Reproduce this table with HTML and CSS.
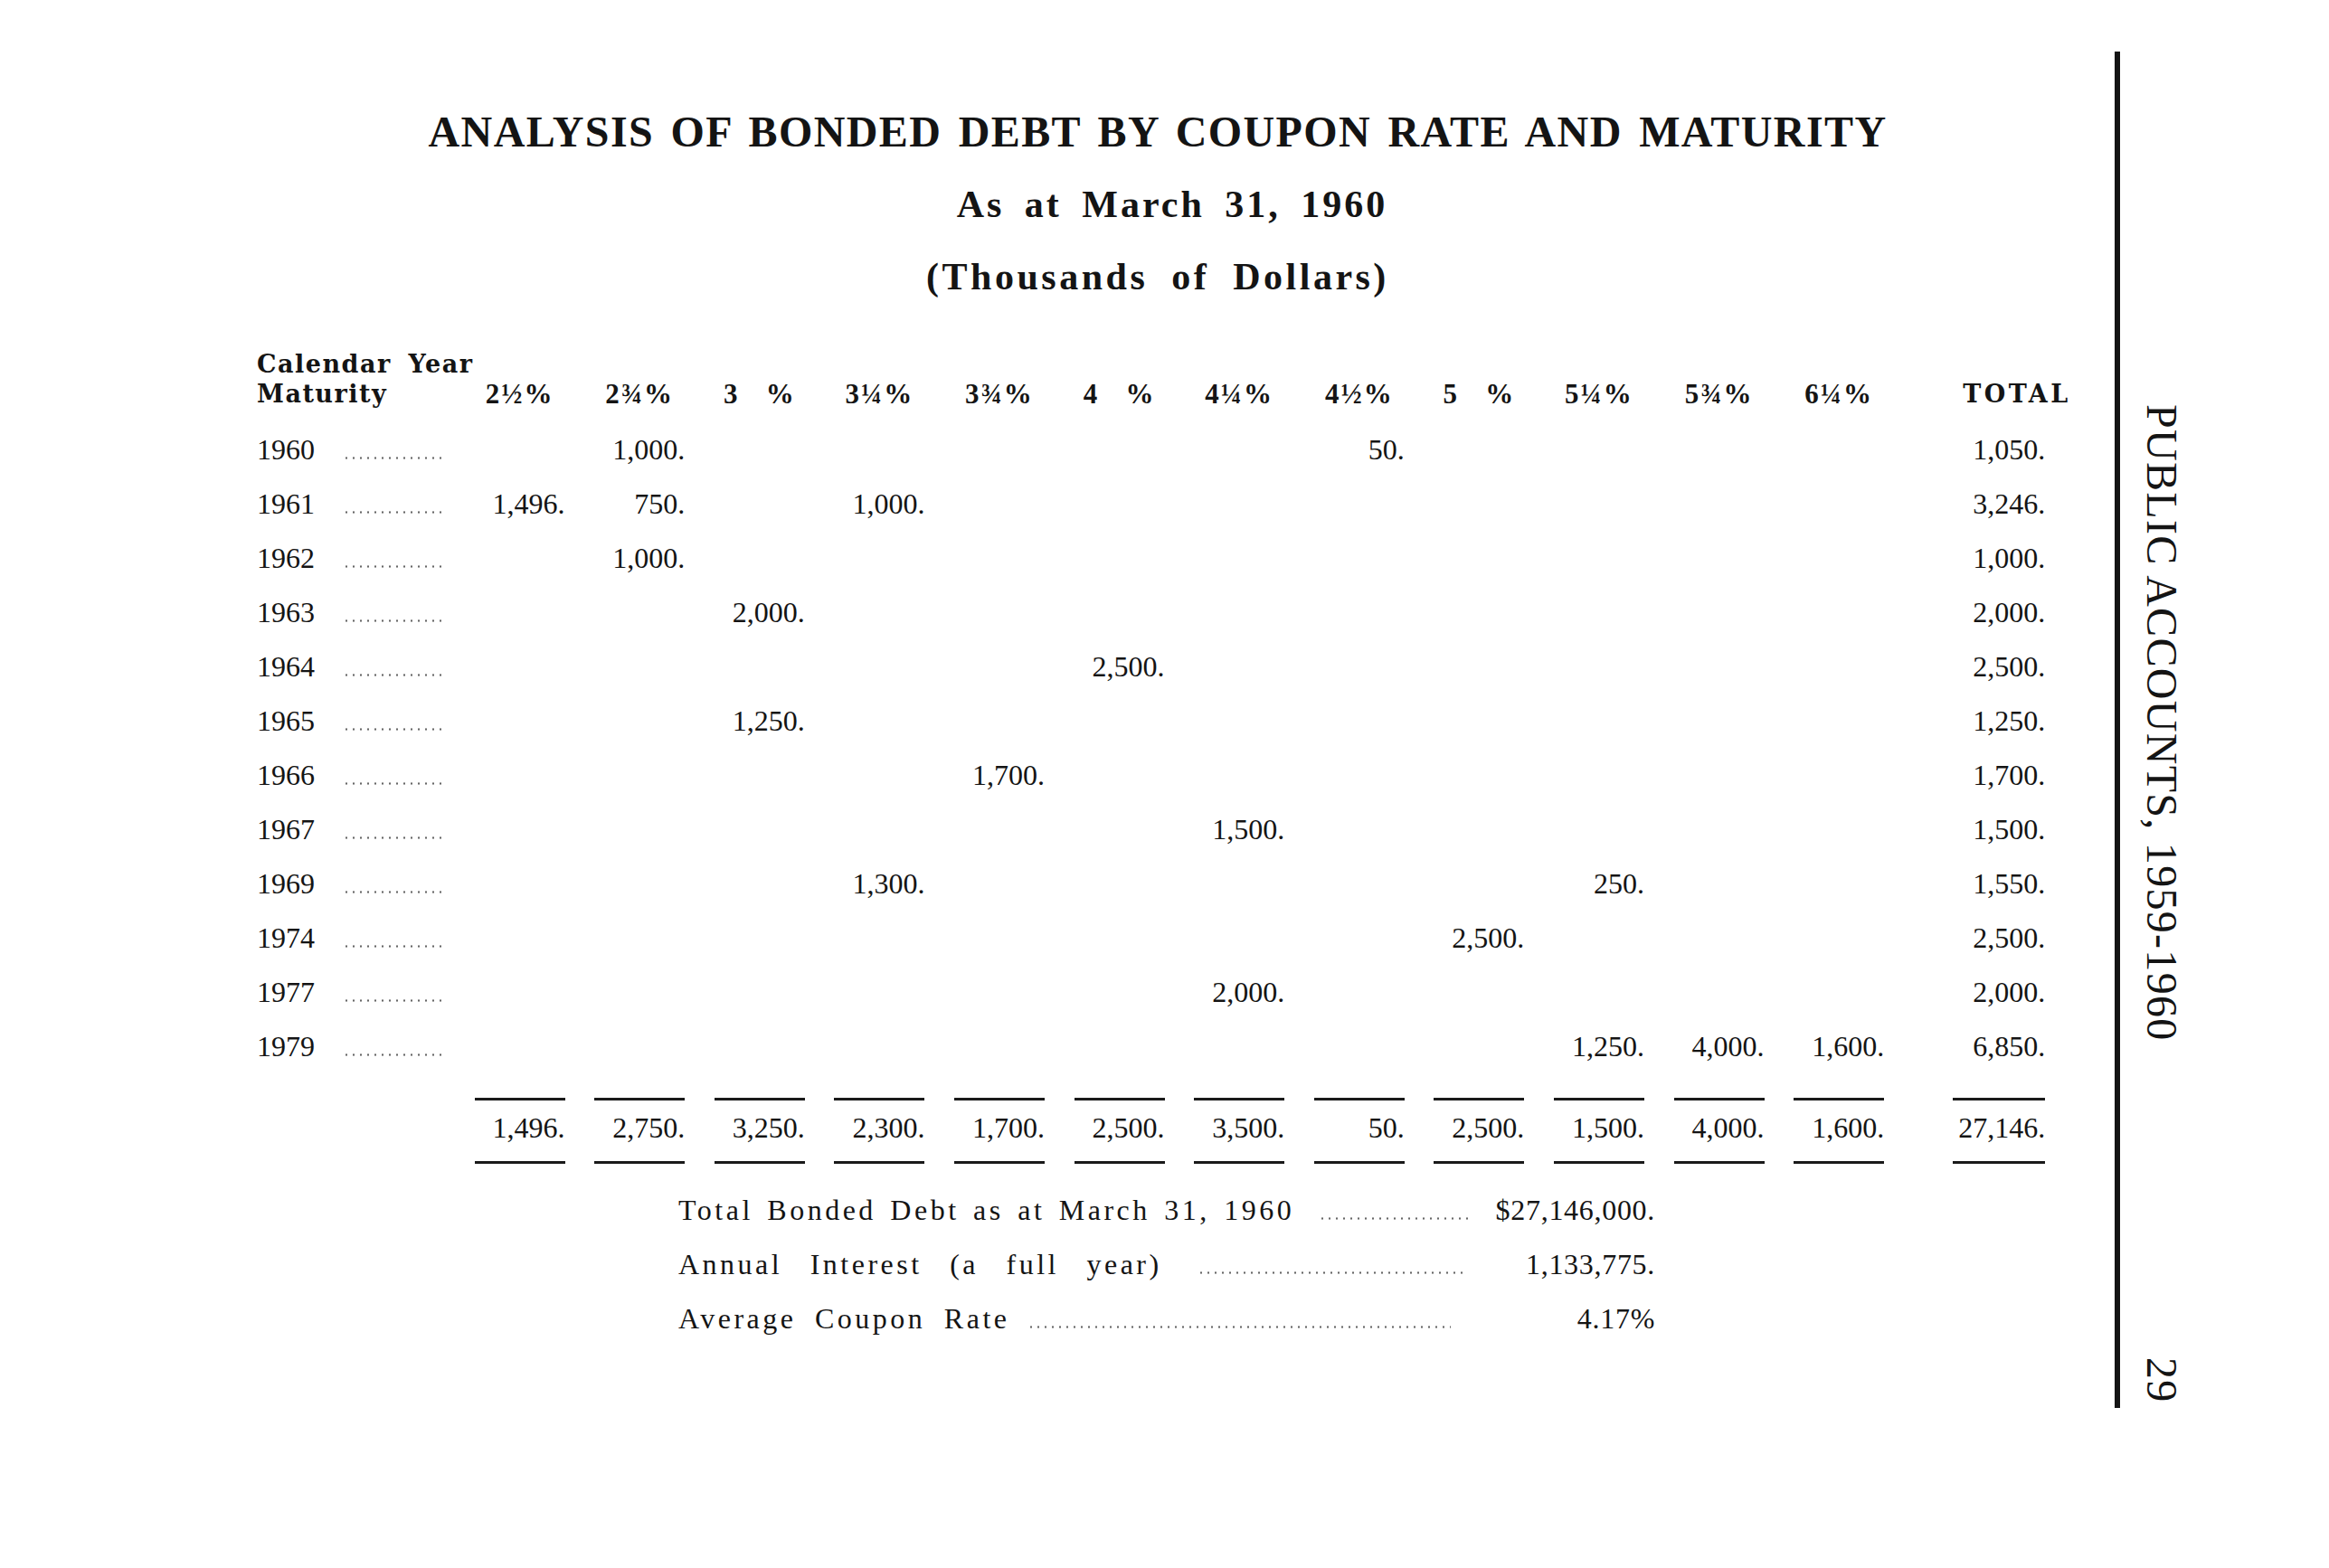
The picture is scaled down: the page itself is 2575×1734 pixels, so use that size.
FILE: index.html
```html
<!DOCTYPE html>
<html lang="en">
<head>
<meta charset="utf-8">
<title>Analysis of Bonded Debt by Coupon Rate and Maturity</title>
<link rel="stylesheet" href="styles.css">
</head>
<body>
<div class="page">
  <div class="main">
    <div class="heading">
      <div class="title">ANALYSIS OF BONDED DEBT BY COUPON RATE AND MATURITY</div>
      <div class="sub">As at March 31, 1960</div>
      <div class="units">(Thousands of Dollars)</div>
    </div>

    <div class="table">
      <div class="row hdr">
        <div class="lbl">Calendar Year<br>Maturity</div>
        <div class="pct">2½%</div>
        <div class="pct">2¾%</div>
        <div class="pct">3&nbsp;&nbsp;&nbsp;%</div>
        <div class="pct">3¼%</div>
        <div class="pct">3¾%</div>
        <div class="pct">4&nbsp;&nbsp;&nbsp;%</div>
        <div class="pct">4¼%</div>
        <div class="pct">4½%</div>
        <div class="pct">5&nbsp;&nbsp;&nbsp;%</div>
        <div class="pct">5¼%</div>
        <div class="pct">5¾%</div>
        <div class="pct">6¼%</div>
        <div class="lbl total">TOTAL</div>
      </div>

      <div class="rows">
        <div class="row data"><div class="yr">1960<span class="lead"></span></div><div></div><div class="v">1,000.</div><div></div><div></div><div></div><div></div><div></div><div class="v">50.</div><div></div><div></div><div></div><div></div><div class="v">1,050.</div></div>
        <div class="row data"><div class="yr">1961<span class="lead"></span></div><div class="v">1,496.</div><div class="v">750.</div><div></div><div class="v">1,000.</div><div></div><div></div><div></div><div></div><div></div><div></div><div></div><div></div><div class="v">3,246.</div></div>
        <div class="row data"><div class="yr">1962<span class="lead"></span></div><div></div><div class="v">1,000.</div><div></div><div></div><div></div><div></div><div></div><div></div><div></div><div></div><div></div><div></div><div class="v">1,000.</div></div>
        <div class="row data"><div class="yr">1963<span class="lead"></span></div><div></div><div></div><div class="v">2,000.</div><div></div><div></div><div></div><div></div><div></div><div></div><div></div><div></div><div></div><div class="v">2,000.</div></div>
        <div class="row data"><div class="yr">1964<span class="lead"></span></div><div></div><div></div><div></div><div></div><div></div><div class="v">2,500.</div><div></div><div></div><div></div><div></div><div></div><div></div><div class="v">2,500.</div></div>
        <div class="row data"><div class="yr">1965<span class="lead"></span></div><div></div><div></div><div class="v">1,250.</div><div></div><div></div><div></div><div></div><div></div><div></div><div></div><div></div><div></div><div class="v">1,250.</div></div>
        <div class="row data"><div class="yr">1966<span class="lead"></span></div><div></div><div></div><div></div><div></div><div class="v">1,700.</div><div></div><div></div><div></div><div></div><div></div><div></div><div></div><div class="v">1,700.</div></div>
        <div class="row data"><div class="yr">1967<span class="lead"></span></div><div></div><div></div><div></div><div></div><div></div><div></div><div class="v">1,500.</div><div></div><div></div><div></div><div></div><div></div><div class="v">1,500.</div></div>
        <div class="row data"><div class="yr">1969<span class="lead"></span></div><div></div><div></div><div></div><div class="v">1,300.</div><div></div><div></div><div></div><div></div><div></div><div class="v">250.</div><div></div><div></div><div class="v">1,550.</div></div>
        <div class="row data"><div class="yr">1974<span class="lead"></span></div><div></div><div></div><div></div><div></div><div></div><div></div><div></div><div></div><div class="v">2,500.</div><div></div><div></div><div></div><div class="v">2,500.</div></div>
        <div class="row data"><div class="yr">1977<span class="lead"></span></div><div></div><div></div><div></div><div></div><div></div><div></div><div class="v">2,000.</div><div></div><div></div><div></div><div></div><div></div><div class="v">2,000.</div></div>
        <div class="row data"><div class="yr">1979<span class="lead"></span></div><div></div><div></div><div></div><div></div><div></div><div></div><div></div><div></div><div></div><div class="v">1,250.</div><div class="v">4,000.</div><div class="v">1,600.</div><div class="v">6,850.</div></div>
      </div>

      <div class="row rules top">
        <div></div>
        <div class="rl"></div><div class="rl"></div><div class="rl"></div><div class="rl"></div><div class="rl"></div><div class="rl"></div>
        <div class="rl"></div><div class="rl"></div><div class="rl"></div><div class="rl"></div><div class="rl"></div><div class="rl"></div>
        <div class="rl wide"></div>
      </div>
      <div class="row data sums">
        <div></div>
        <div class="v">1,496.</div><div class="v">2,750.</div><div class="v">3,250.</div><div class="v">2,300.</div><div class="v">1,700.</div><div class="v">2,500.</div>
        <div class="v">3,500.</div><div class="v">50.</div><div class="v">2,500.</div><div class="v">1,500.</div><div class="v">4,000.</div><div class="v">1,600.</div>
        <div class="v">27,146.</div>
      </div>
      <div class="row rules bottom">
        <div></div>
        <div class="rl"></div><div class="rl"></div><div class="rl"></div><div class="rl"></div><div class="rl"></div><div class="rl"></div>
        <div class="rl"></div><div class="rl"></div><div class="rl"></div><div class="rl"></div><div class="rl"></div><div class="rl"></div>
        <div class="rl wide"></div>
      </div>
    </div>

    <div class="summary">
      <div class="s-label r1"><span>Total Bonded Debt as at March 31, 1960</span><span class="s-dots d1"></span></div>
      <div class="s-val">$27,146,000.</div>
      <div class="s-label r2"><span>Annual Interest (a full year)</span><span class="s-dots d2"></span></div>
      <div class="s-val">1,133,775.</div>
      <div class="s-label r3"><span>Average Coupon Rate</span><span class="s-dots d3"></span></div>
      <div class="s-val">4.17%</div>
    </div>
  </div>

  <div class="vline"></div>

  <div class="side">
    <span class="side-title">PUBLIC ACCOUNTS, 1959-1960</span>
    <span class="folio">29</span>
  </div>
</div>
</body>
</html>
```

FILE: styles.css
```css
* { box-sizing: border-box; }

html, body {
  margin: 0;
  padding: 0;
  background: #ffffff;
}

body {
  width: 2575px;
  height: 1734px;
  overflow: hidden;
  color: #141414;
  font-family: "Liberation Serif", "Times New Roman", serif;
}

.page {
  display: flex;
  align-items: flex-start;
}

.main {
  width: 2338px;
  padding-left: 284px;
  padding-top: 106px;
}

/* ---------- headings ---------- */
.heading {
  width: 1992px;
  text-align: center;
  font-weight: bold;
  line-height: 80px;
  white-space: nowrap;
}

.title {
  font-size: 48px;
  letter-spacing: 1.4px;
  word-spacing: 5px;
}

.sub {
  font-size: 42px;
  letter-spacing: 3px;
  word-spacing: 9px;
  padding-left: 32px;
}

.units {
  font-size: 42px;
  letter-spacing: 3.5px;
  word-spacing: 12px;
}

/* ---------- table ---------- */
.table {
  margin-top: 40px;
}

.row {
  display: grid;
  grid-template-columns: 208px repeat(12, 132.6px) 178px;
}

.hdr {
  height: 66px;
  align-items: end;
}

.lbl {
  font-family: "DejaVu Serif", "Liberation Serif", serif;
  font-weight: bold;
  font-size: 27px;
  line-height: 33px;
  letter-spacing: 1.5px;
  word-spacing: 8px;
  white-space: nowrap;
}

.lbl.total {
  padding-left: 87px;
  letter-spacing: 3.5px;
}

.pct {
  justify-self: end;
  width: 100px;
  text-align: center;
  font-weight: bold;
  font-size: 31px;
  line-height: 33px;
  letter-spacing: 2px;
  white-space: nowrap;
}

.rows {
  margin-top: 15px;
}

.data {
  height: 60px;
  line-height: 60px;
  font-size: 32px;
}

.v {
  text-align: right;
  white-space: nowrap;
}

.yr {
  white-space: nowrap;
}

.lead {
  display: inline-block;
  width: 110px;
  height: 3px;
  margin-left: 31px;
  vertical-align: baseline;
  background-image: radial-gradient(circle, #666 0.9px, transparent 1.4px);
  background-size: 8px 3px;
  background-repeat: repeat-x;
}

.rules {
  height: 3px;
}

.rules.top {
  margin-top: 27px;
}

.rules.bottom {
  margin-top: 7px;
}

.rl {
  justify-self: end;
  width: 100px;
  height: 3px;
  background: #1a1a1a;
}

.rl.wide {
  width: 102px;
}

/* ---------- summary ---------- */
.summary {
  display: grid;
  grid-template-columns: 875px 205px;
  margin-top: 21px;
  margin-left: 466px;
  font-size: 32px;
  line-height: 60px;
}

.s-label {
  display: flex;
  align-items: baseline;
  white-space: nowrap;
  letter-spacing: 3.5px;
}

.r1 { word-spacing: 4px; }
.r2 { word-spacing: 19px; }
.r3 { word-spacing: 9px; }

.s-dots {
  flex: 1;
  height: 3px;
  margin-right: 10px;
  background-image: radial-gradient(circle, #666 0.9px, transparent 1.4px);
  background-size: 8px 3px;
  background-repeat: repeat-x;
}

.d1 { margin-left: 27px; margin-right: 2px; }
.d2 { margin-left: 39px; margin-right: 8px; }
.d3 { margin-left: 20px; margin-right: 21px; }

.s-val {
  text-align: right;
  white-space: nowrap;
  letter-spacing: 0.7px;
}

/* ---------- right margin ---------- */
.vline {
  width: 6px;
  height: 1500px;
  margin-top: 57px;
  background: #141414;
}

.side {
  writing-mode: vertical-rl;
  display: flex;
  justify-content: space-between;
  height: 1105px;
  margin-top: 447px;
  margin-left: 16px;
  font-size: 48px;
  line-height: 60px;
  letter-spacing: 1.3px;
  white-space: nowrap;
}
```
